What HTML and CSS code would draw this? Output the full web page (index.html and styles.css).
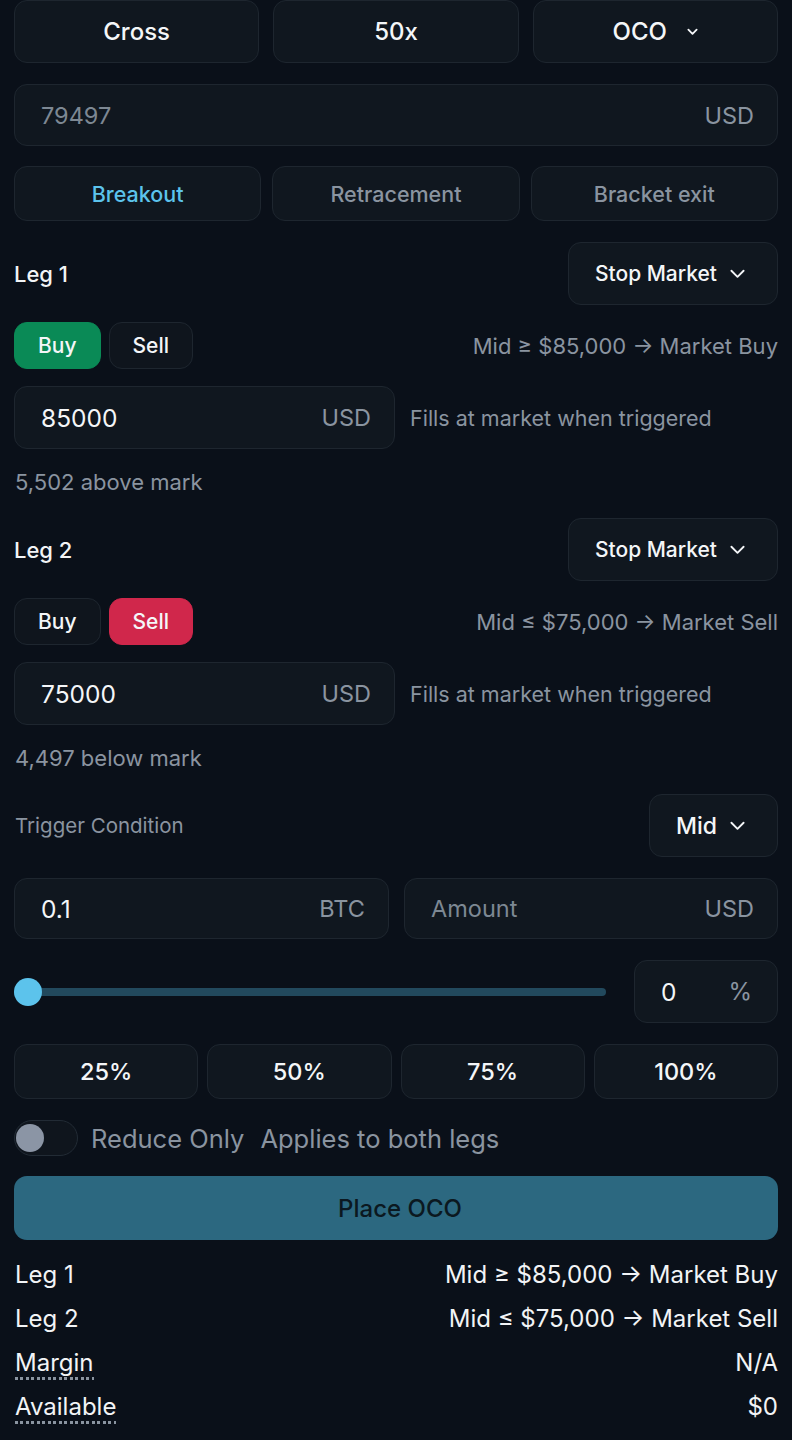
FILE: index.html
```html
<!DOCTYPE html>
<html lang="en">
<head>
    <meta charset="UTF-8">
    <meta name="viewport" content="width=device-width, initial-scale=1.0">
    <title>OCO order</title>
    <link rel="stylesheet" href="styles.css">
</head>
<body>
    <div class="panel">
        <div class="top-row">
            <button class="btn">Cross</button>
            <button class="btn">50x</button>
            <button class="btn">OCO
                <svg class="chev small" viewBox="0 0 12 8"><path d="M1.5 1.5l4.5 4.5 4.5-4.5"/></svg>
            </button>
        </div>

        <div class="field mark-field">
            <span class="placeholder">79497</span>
            <span class="unit">USD</span>
        </div>

        <div class="tabs">
            <button class="tab active">Breakout</button>
            <button class="tab">Retracement</button>
            <button class="tab">Bracket exit</button>
        </div>

        <div class="leg">
            <div class="leg-head">
                <span class="leg-title">Leg 1</span>
                <button class="select">Stop Market
                    <svg class="chev" viewBox="0 0 16 10"><path d="M1.5 1.5l6.5 6.5 6.5-6.5"/></svg>
                </button>
            </div>
            <div class="side-row">
                <div class="sides">
                    <button class="side buy active">Buy</button>
                    <button class="side">Sell</button>
                </div>
                <span class="rule">Mid ≥ $85,000 → Market Buy</span>
            </div>
            <div class="price-row">
                <div class="field">
                    <span class="value">85000</span>
                    <span class="unit">USD</span>
                </div>
                <span class="help">Fills at market when triggered</span>
            </div>
            <div class="note">5,502 above mark</div>
        </div>

        <div class="leg">
            <div class="leg-head">
                <span class="leg-title">Leg 2</span>
                <button class="select">Stop Market
                    <svg class="chev" viewBox="0 0 16 10"><path d="M1.5 1.5l6.5 6.5 6.5-6.5"/></svg>
                </button>
            </div>
            <div class="side-row">
                <div class="sides">
                    <button class="side">Buy</button>
                    <button class="side sell active">Sell</button>
                </div>
                <span class="rule">Mid ≤ $75,000 → Market Sell</span>
            </div>
            <div class="price-row">
                <div class="field">
                    <span class="value">75000</span>
                    <span class="unit">USD</span>
                </div>
                <span class="help">Fills at market when triggered</span>
            </div>
            <div class="note">4,497 below mark</div>
        </div>

        <div class="leg-head trigger">
            <span class="trigger-title">Trigger Condition</span>
            <button class="select">Mid
                <svg class="chev" viewBox="0 0 16 10"><path d="M1.5 1.5l6.5 6.5 6.5-6.5"/></svg>
            </button>
        </div>

        <div class="amount-row">
            <div class="field">
                <span class="value">0.1</span>
                <span class="unit">BTC</span>
            </div>
            <div class="field">
                <span class="placeholder">Amount</span>
                <span class="unit">USD</span>
            </div>
        </div>

        <div class="slider-row">
            <div class="slider">
                <div class="track"></div>
                <div class="thumb"></div>
            </div>
            <div class="field pct-field">
                <span class="value">0</span>
                <span class="unit">%</span>
            </div>
        </div>

        <div class="pcts">
            <button class="btn pct">25%</button>
            <button class="btn pct">50%</button>
            <button class="btn pct">75%</button>
            <button class="btn pct">100%</button>
        </div>

        <div class="toggle-row">
            <div class="toggle"><div class="knob"></div></div>
            <span class="toggle-label">Reduce Only</span>
            <span class="toggle-label">Applies to both legs</span>
        </div>

        <button class="place">Place OCO</button>

        <div class="summary">
            <div class="sum-row"><span>Leg 1</span><span>Mid ≥ $85,000 → Market Buy</span></div>
            <div class="sum-row"><span>Leg 2</span><span>Mid ≤ $75,000 → Market Sell</span></div>
            <div class="sum-row"><span class="dotted">Margin</span><span>N/A</span></div>
            <div class="sum-row"><span class="dotted">Available</span><span>$0</span></div>
        </div>
    </div>
</body>
</html>
```

FILE: styles.css
```css
body {
    margin: 0;
    background-color: #0a1019;
    color: #f2f4f6;
    font-family: Inter, "Noto Sans", sans-serif;
}
button {
    font-family: inherit;
    cursor: pointer;
}
.panel {
    padding: 0 14px;
    display: flex;
    flex-direction: column;
}
.btn {
    height: 63px;
    background-color: #10171f;
    border: 1px solid #1e262f;
    border-radius: 13px;
    color: #f4f6f8;
    font-size: 24px;
    font-weight: 500;
    display: flex;
    align-items: center;
    justify-content: center;
    gap: 20px;
}
.top-row {
    display: grid;
    grid-template-columns: 1fr 1fr 1fr;
    gap: 14px;
}
.chev {
    width: 15px;
    height: 10px;
    fill: none;
    stroke: currentColor;
    stroke-width: 2;
    stroke-linecap: round;
    stroke-linejoin: round;
}
.chev.small {
    width: 11px;
    height: 8px;
}
.field {
    height: 63px;
    box-sizing: border-box;
    background-color: #10171f;
    border: 1px solid #1e262f;
    border-radius: 13px;
    display: flex;
    align-items: center;
    justify-content: space-between;
    padding: 0 23px 0 26px;
    font-size: 23.5px;
}
.mark-field {
    margin-top: 21px;
    height: 62px;
}
.placeholder {
    color: #7d8893;
}
.unit {
    color: #8a94a0;
}
.value {
    color: #f4f6f8;
    font-size: 24.5px;
}
.tabs {
    margin-top: 20px;
    display: grid;
    grid-template-columns: 1fr 1fr 1fr;
    gap: 11px;
}
.tab {
    height: 55px;
    background-color: #10171f;
    border: 1px solid #1e262f;
    border-radius: 13px;
    color: #8a94a0;
    font-size: 21.5px;
    font-weight: 500;
}
.tab.active {
    color: #5cc3ec;
}
.leg-head {
    margin-top: 21px;
    display: flex;
    align-items: center;
    justify-content: space-between;
}
.leg + .leg .leg-head {
    margin-top: 24px;
}
.leg-title {
    font-size: 22px;
    font-weight: 500;
}
.select {
    height: 63px;
    background-color: #10171f;
    border: 1px solid #1e262f;
    border-radius: 13px;
    color: #f4f6f8;
    font-size: 21px;
    font-weight: 500;
    padding: 0 32px 0 26px;
    display: flex;
    align-items: center;
    gap: 13px;
}
.side-row {
    margin-top: 17px;
    display: flex;
    align-items: center;
    justify-content: space-between;
}
.sides {
    display: flex;
    gap: 8px;
}
.side {
    height: 47px;
    padding: 0 23px;
    background-color: #0f151d;
    border: 1px solid #1e262f;
    border-radius: 13px;
    color: #f4f6f8;
    font-size: 21px;
    font-weight: 500;
}
.side.buy.active {
    background-color: #0a8a56;
    border-color: #0a8a56;
}
.side.sell.active {
    background-color: #d0274b;
    border-color: #d0274b;
}
.rule {
    color: #8a94a0;
    font-size: 22px;
}
.price-row {
    margin-top: 17px;
    display: flex;
    align-items: center;
    gap: 15px;
}
.price-row .field {
    width: 381px;
}
.help {
    color: #8a94a0;
    font-size: 21.5px;
}
.note {
    margin-top: 21px;
    line-height: 24px;
    font-size: 22px;
    color: #8a94a0;
    padding-left: 1px;
}
.leg-head.trigger {
    margin-top: 24px;
}
.trigger-title {
    color: #8a94a0;
    font-size: 20.5px;
    padding-left: 1px;
}
.trigger .select {
    font-size: 23px;
}
.amount-row {
    margin-top: 21px;
    display: grid;
    grid-template-columns: 375px 1fr;
    gap: 15px;
}
.amount-row .field {
    height: 61px;
}
.slider-row {
    margin-top: 21px;
    display: flex;
    align-items: center;
    gap: 28px;
}
.slider {
    flex: 1;
    position: relative;
    height: 28px;
    display: flex;
    align-items: center;
}
.track {
    width: 100%;
    height: 8px;
    border-radius: 4px;
    background-color: #22495d;
}
.thumb {
    position: absolute;
    left: 0;
    top: 0;
    width: 28px;
    height: 28px;
    border-radius: 50%;
    background-color: #5cc3ec;
}
.pct-field {
    width: 144px;
    padding: 0 25px 0 26px;
}
.pct-field .unit {
    font-size: 24px;
}
.pcts {
    margin-top: 21px;
    display: grid;
    grid-template-columns: repeat(4, 1fr);
    gap: 9px;
}
.btn.pct {
    height: 55px;
    font-size: 23.5px;
}
.toggle-row {
    margin-top: 21px;
    display: flex;
    align-items: center;
    gap: 16px;
}
.toggle {
    width: 64px;
    height: 36px;
    box-sizing: border-box;
    border: 1px solid #222b35;
    border-radius: 18px;
    background-color: #0f151d;
    display: flex;
    align-items: center;
    padding-left: 1px;
    margin-right: -3px;
}
.knob {
    width: 28px;
    height: 28px;
    border-radius: 50%;
    background-color: #8b95a5;
}
.toggle-label {
    color: #8a94a0;
    font-size: 25.5px;
}
.place {
    margin-top: 20px;
    height: 64px;
    border: none;
    border-radius: 13px;
    background-color: #2c6880;
    color: #0b1820;
    font-size: 24px;
    font-weight: 500;
    padding-left: 14px;
}
.summary {
    margin-top: 12px;
}
.sum-row {
    height: 44px;
    display: flex;
    align-items: center;
    justify-content: space-between;
    font-size: 24px;
    padding-left: 1px;
}
.dotted {
    line-height: 28px;
    padding-bottom: 3px;
    margin-top: 4px;
    background-image: repeating-linear-gradient(to right, #8a94a0 0 3px, transparent 3px 5.5px);
    background-size: 100% 3px;
    background-position: left bottom;
    background-repeat: no-repeat;
}
```
